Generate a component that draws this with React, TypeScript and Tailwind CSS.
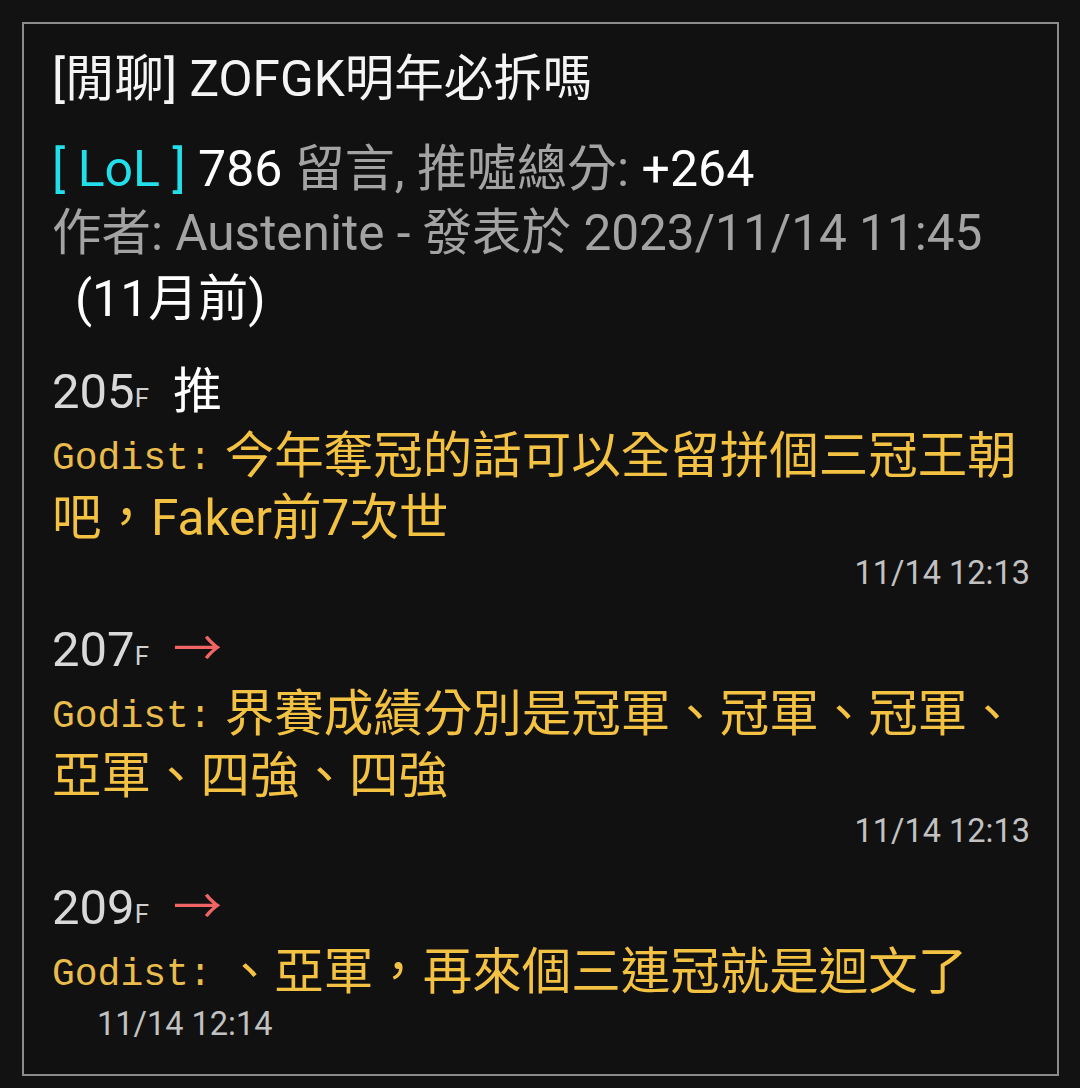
const sans = "font-['Roboto','Noto_Sans_CJK_TC',sans-serif]";

type Comment = {
  floor: string;
  tag: string;
  tagColor: string;
  user: string;
  lines: string[];
  time: string;
  timeInline?: boolean;
};

const comments: Comment[] = [
  {
    floor: "205",
    tag: "推",
    tagColor: "text-white",
    user: "Godist",
    lines: ["今年奪冠的話可以全留拼個三冠王朝", "吧，Faker前7次世"],
    time: "11/14 12:13",
  },
  {
    floor: "207",
    tag: "→",
    tagColor: "text-[#f06464]",
    user: "Godist",
    lines: ["界賽成績分別是冠軍、冠軍、冠軍、", "亞軍、四強、四強"],
    time: "11/14 12:13",
  },
  {
    floor: "209",
    tag: "→",
    tagColor: "text-[#f06464]",
    user: "Godist",
    lines: ["、亞軍，再來個三連冠就是迴文了"],
    time: "11/14 12:14",
    timeInline: true,
  },
];

function CommentItem({ c, first }: { c: Comment; first: boolean }) {
  return (
    <div className={first ? "mt-[28px]" : "mt-[21px]"}>
      <div className="flex h-[64px] items-center">
        <span className="text-[49px] leading-none text-[#d9d9d9]">{c.floor}</span>
        <span className="mt-[14px] text-[26px] leading-none text-[#cfcfcf]">F</span>
        <span className={"ml-[24px] text-[49px] leading-none " + c.tagColor}>{c.tag}</span>
      </div>
      <div className="pt-[3px]">
        {c.lines.map((line, i) => (
          <div key={i} className="flex h-[62px] items-center whitespace-nowrap text-[#f4c242]">
            {i === 0 && (
              <span className="mt-[3px] font-['Liberation_Mono',monospace] text-[38px] leading-none text-[#e9bc4c]">
                {c.user}:
              </span>
            )}
            <span className={(i === 0 ? "ml-[13px] " : "") + "text-[49.5px] leading-none"}>{line}</span>
          </div>
        ))}
      </div>
      {c.timeInline ? (
        <div className="flex h-[40px] items-center pl-[45px] text-[32.5px] leading-none text-[#c2c2c2]">
          {c.time}
        </div>
      ) : (
        <div className="flex h-[46px] items-center justify-end text-[32.5px] leading-none text-[#c2c2c2]">
          {c.time}
        </div>
      )}
    </div>
  );
}

export default function App() {
  return (
    <div className={"w-[1080px] h-[1088px] bg-[#121212] pl-[22px] pr-[21px] pt-[22px] " + sans}>
      <div className="h-[1054px] border-2 border-[#8c8c8c] bg-[#111111] pl-[28px] pr-[27px] pt-[24px]">
        <div className="flex h-[64px] items-center whitespace-nowrap text-[49.5px] leading-none text-[#f4f4f4]">
          [閒聊] ZOFGK明年必拆嗎
        </div>
        <div className="mt-[24px] text-[50px] leading-none">
          <div className="flex h-[65px] items-center whitespace-pre">
            <span className="text-[#23dfe9]">[ LoL ]</span>
            <span className="text-white"> 786</span>
            <span className="text-[#a3a3a3]"> 留言, 推噓總分: </span>
            <span className="text-white">+264</span>
          </div>
          <div className="flex h-[65px] items-center whitespace-nowrap text-[49.5px] text-[#a3a3a3]">
            作者: Austenite - 發表於 2023/11/14 11:45
          </div>
          <div className="flex h-[65px] items-center pl-[23px] text-white">(11月前)</div>
        </div>
        {comments.map((c, i) => (
          <CommentItem key={c.floor} c={c} first={i === 0} />
        ))}
      </div>
    </div>
  );
}
